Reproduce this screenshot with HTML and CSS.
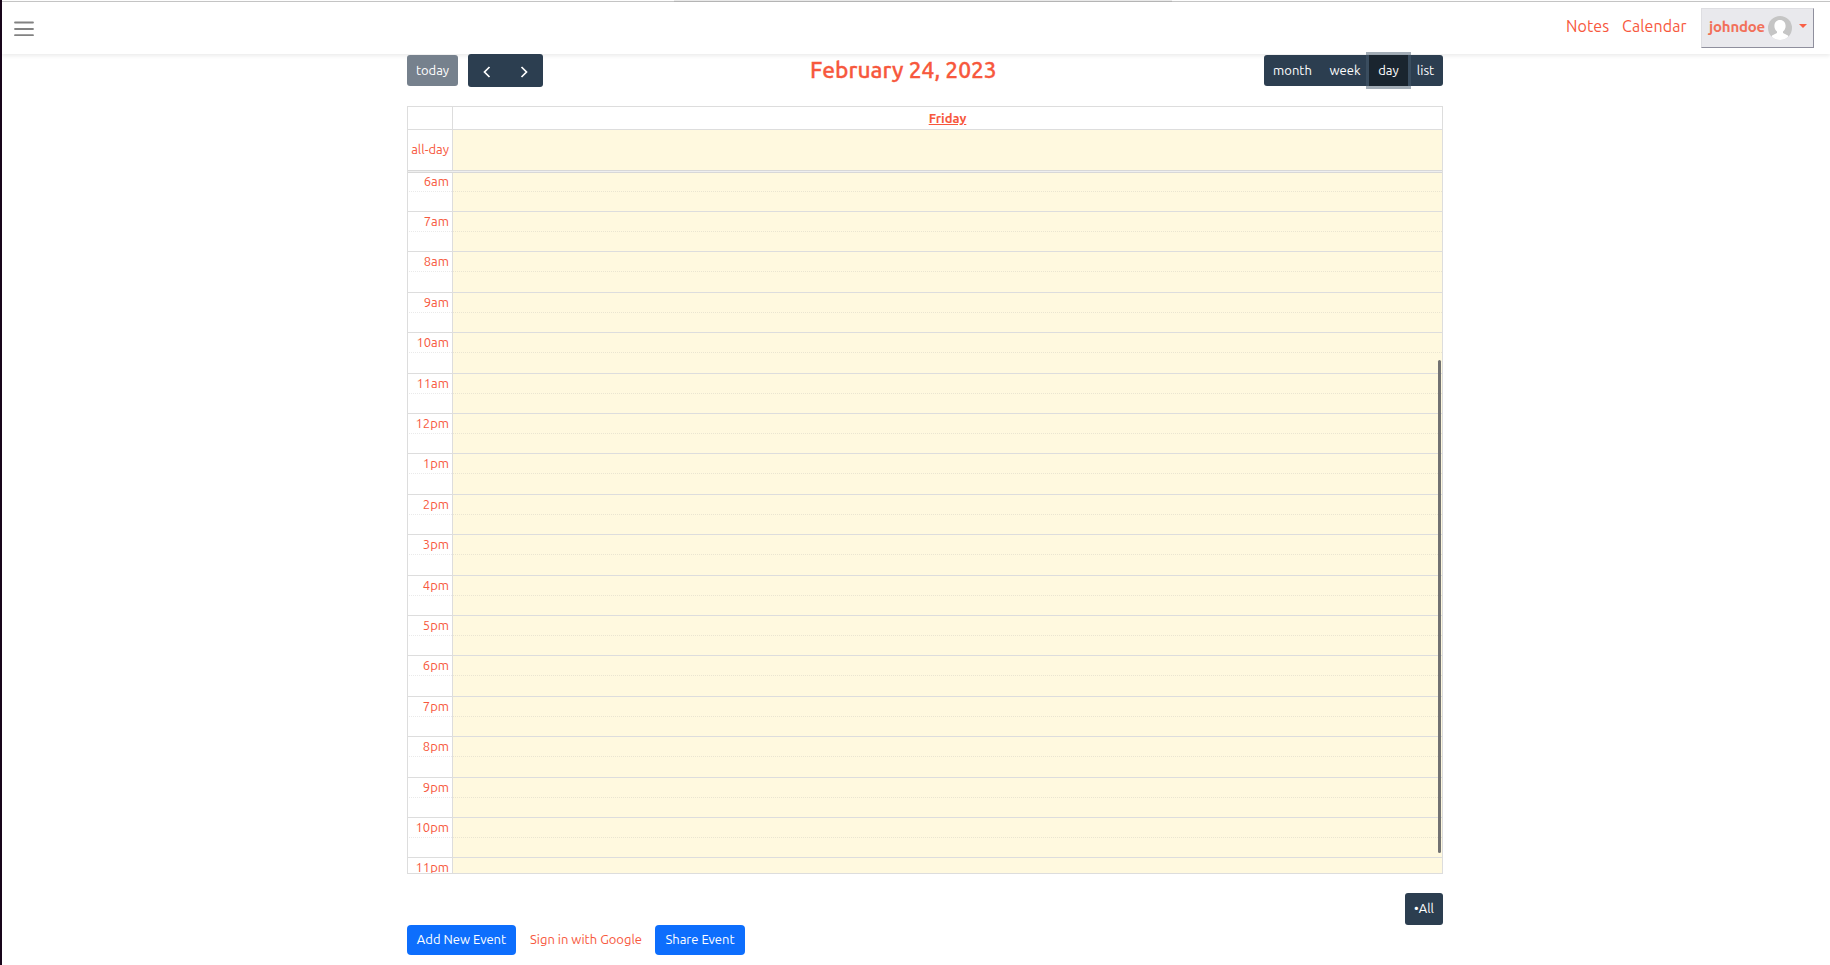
FILE: index.html
```
<!DOCTYPE html>
<html lang="en">
<head>
<meta charset="utf-8">
<title>Calendar</title>
<link rel="stylesheet" href="styles.css">
</head>
<body>
<header class="navbar">
  <svg class="menu" width="20" height="16" viewBox="0 0 20 16"><path d="M1 1.500H19M1 8H19M1 14.200H19" stroke="#828282" stroke-width="1.800" stroke-linecap="round"/></svg>
  <nav class="links">
    <a class="notes">Notes</a>
    <a class="cal-link">Calendar</a>
    <button class="user"><span class="username">johndoe</span>
      <svg class="avatar" width="24" height="24" viewBox="0 0 24 24"><defs><clipPath id="round"><circle cx="12" cy="12" r="12"/></clipPath></defs><g clip-path="url(#round)"><rect width="24" height="24" fill="#c5c5c5"/><path d="M12 4C8.500 4 6.400 6.500 6.400 10C6.400 12.500 7.500 14.400 9 15.500V17L4 19.500L2.500 24H21.500L20 19.500L15 17V15.500C16.500 14.400 17.600 12.500 17.600 10C17.600 6.500 15.500 4 12 4Z" fill="#fff"/></g></svg>
      <span class="caret"></span>
    </button>
  </nav>
</header>
<main class="page">
  <div class="toolbar">
    <div class="left">
      <button class="btn today">today</button>
      <div class="arrows">
        <svg width="8" height="12" viewBox="0 0 8 12"><path d="M6.500 1L1.500 6L6.500 11" fill="none" stroke="#fff" stroke-width="1.700"/></svg>
        <svg width="8" height="12" viewBox="0 0 8 12"><path d="M1.500 1L6.500 6L1.500 11" fill="none" stroke="#fff" stroke-width="1.700"/></svg>
      </div>
    </div>
    <h2 class="title">February 24, 2023</h2>
    <div class="views"><button class="btn month">month</button><button class="btn week">week</button><button class="btn day">day</button><button class="btn list">list</button></div>
  </div>
  <section class="grid">
    <div class="row head"><div class="axis"></div><div class="cell"><a class="weekday">Friday</a></div></div>
    <div class="row allday"><div class="axis">all-day</div><div class="cell tint"></div></div>
    <div class="divider"></div>
    <div class="scroller">
      <div class="slots">
        <div class="row hour"><div class="axis">6am</div><div class="cell tint"></div></div>
        <div class="row hour"><div class="axis">7am</div><div class="cell tint"></div></div>
        <div class="row hour"><div class="axis">8am</div><div class="cell tint"></div></div>
        <div class="row hour"><div class="axis">9am</div><div class="cell tint"></div></div>
        <div class="row hour"><div class="axis">10am</div><div class="cell tint"></div></div>
        <div class="row hour"><div class="axis">11am</div><div class="cell tint"></div></div>
        <div class="row hour"><div class="axis">12pm</div><div class="cell tint"></div></div>
        <div class="row hour"><div class="axis">1pm</div><div class="cell tint"></div></div>
        <div class="row hour"><div class="axis">2pm</div><div class="cell tint"></div></div>
        <div class="row hour"><div class="axis">3pm</div><div class="cell tint"></div></div>
        <div class="row hour"><div class="axis">4pm</div><div class="cell tint"></div></div>
        <div class="row hour"><div class="axis">5pm</div><div class="cell tint"></div></div>
        <div class="row hour"><div class="axis">6pm</div><div class="cell tint"></div></div>
        <div class="row hour"><div class="axis">7pm</div><div class="cell tint"></div></div>
        <div class="row hour"><div class="axis">8pm</div><div class="cell tint"></div></div>
        <div class="row hour"><div class="axis">9pm</div><div class="cell tint"></div></div>
        <div class="row hour"><div class="axis">10pm</div><div class="cell tint"></div></div>
        <div class="row hour"><div class="axis">11pm</div><div class="cell tint"></div></div>
      </div>
      <div class="thumb"></div>
    </div>
  </section>
  <div class="filter"><button class="btn all">•All</button></div>
  <div class="actions"><button class="primary add">Add New Event</button><a class="google">Sign in with Google</a><button class="primary share">Share Event</button></div>
</main>
<div class="tab-shade"></div>
</body>
</html>
```
FILE: styles.css
```
* { box-sizing: border-box; }
body {
  margin: 0;
  height: 965px;
  overflow: hidden;
  border-left: 2px solid #18051a;
  background: #fff;
  color: #f7583d;
  font: 13px/20px Ubuntu, "Noto Sans", sans-serif;
}
button { font: inherit; padding: 0 0 2px; border: 0; white-space: nowrap; }
.navbar {
  display: flex;
  justify-content: space-between;
  align-items: flex-start;
  height: 53px;
  margin-top: 1px;
  border-top: 1px solid #c4c4c4;
  box-shadow: 0 2px 4px rgba(0, 0, 0, 0.08);
  padding: 0 16px 0 12px;
}
.menu { margin-top: 19px; }
.links { display: flex; font-size: 16px; line-height: 24px; }
.notes { margin-top: 12px; width: 56px; letter-spacing: 0.1px; }
.cal-link { margin-top: 12px; width: 79px; letter-spacing: 0.1px; }
.user {
  display: flex;
  align-items: center;
  margin-top: 6px;
  width: 113px;
  height: 40px;
  padding: 0 6px 0 7px;
  background: #e9e9ed;
  border: 1px solid #dedee2;
  border-right-color: #8f8f9d;
  border-bottom-color: #8f8f9d;
  color: #f27059;
  font-weight: 700;
}
.username { width: 60px; margin-bottom: 2px; font-size: 15px; letter-spacing: -0.2px; text-align: left; }
.avatar { flex: none; }
.caret { margin: 0 0 4px 7px; border: 4px solid transparent; border-top-color: #f95f45; border-bottom: 0; }
.page { width: 1036px; margin-left: 405px; }
.toolbar { display: flex; height: 52px; }
.left { display: flex; width: 403px; }
.btn { height: 31px; margin-top: 1px; background: #2c3e50; color: #fff; font-size: 13px; }
.today { width: 51px; border-radius: 3px; background: #76818d; }
.arrows {
  display: flex;
  justify-content: space-between;
  align-items: center;
  width: 75px;
  height: 33px;
  margin-left: 10px;
  padding: 2px 15px 0;
  border-radius: 3px;
  background: #2c3e50;
}
.title { margin: 0; font-size: 22.75px; line-height: 32px; font-weight: 500; white-space: nowrap; -webkit-text-stroke: 0.3px; }
.views { display: flex; width: 179px; margin-left: auto; }
.month { width: 57px; border-radius: 3px 0 0 3px; }
.week { width: 48px; }
.day { position: relative; width: 39px; background: #1a252f; box-shadow: 0 0 0 3px rgba(72, 91, 110, 0.5); }
.list { width: 35px; border-radius: 0 3px 3px 0; }
.grid { height: 768px; border: 1px solid #ddd; }
.row { display: flex; }
.axis { width: 45px; padding-right: 3px; border-right: 1px solid #ddd; text-align: right; }
.cell { flex: 1; text-align: center; }
.tint { background: #fff9df; }
.head { height: 23px; border-bottom: 1px solid #ddd; }
.weekday { font-weight: 700; line-height: 22px; text-decoration: underline; }
.allday { height: 40px; }
.allday .axis { line-height: 38px; }
.divider { height: 3px; background: #efefef; border: solid #d8d8d8; border-width: 1px 0; }
.scroller { position: relative; height: 700px; overflow: hidden; }
.slots { margin-top: -2.3px; }
.hour { position: relative; height: 40.4px; border-top: 1px solid #ddd; line-height: 19px; }
.hour::after { content: ""; position: absolute; left: 1px; right: 0; top: 19px; border-top: 1px dotted rgba(160, 160, 160, 0.22); }
.thumb { position: absolute; right: 1px; top: 187px; width: 3px; height: 493px; border-radius: 2px; background: #727272; }
.filter { display: flex; justify-content: flex-end; height: 51px; padding-top: 19px; }
.all { width: 38px; height: 32px; margin: 0; border-radius: 3px; }
.actions { display: flex; align-items: center; height: 30px; }
.primary { height: 30px; border-radius: 4px; background: #0d6efd; color: #fff; }
.add { width: 109px; }
.google { width: 139px; padding: 0 0 2px 1px; text-align: center; }
.share { width: 90px; }
.tab-shade { position: absolute; left: 674px; top: 0; width: 498px; height: 2px; background: rgba(0, 0, 0, 0.08); }
```
